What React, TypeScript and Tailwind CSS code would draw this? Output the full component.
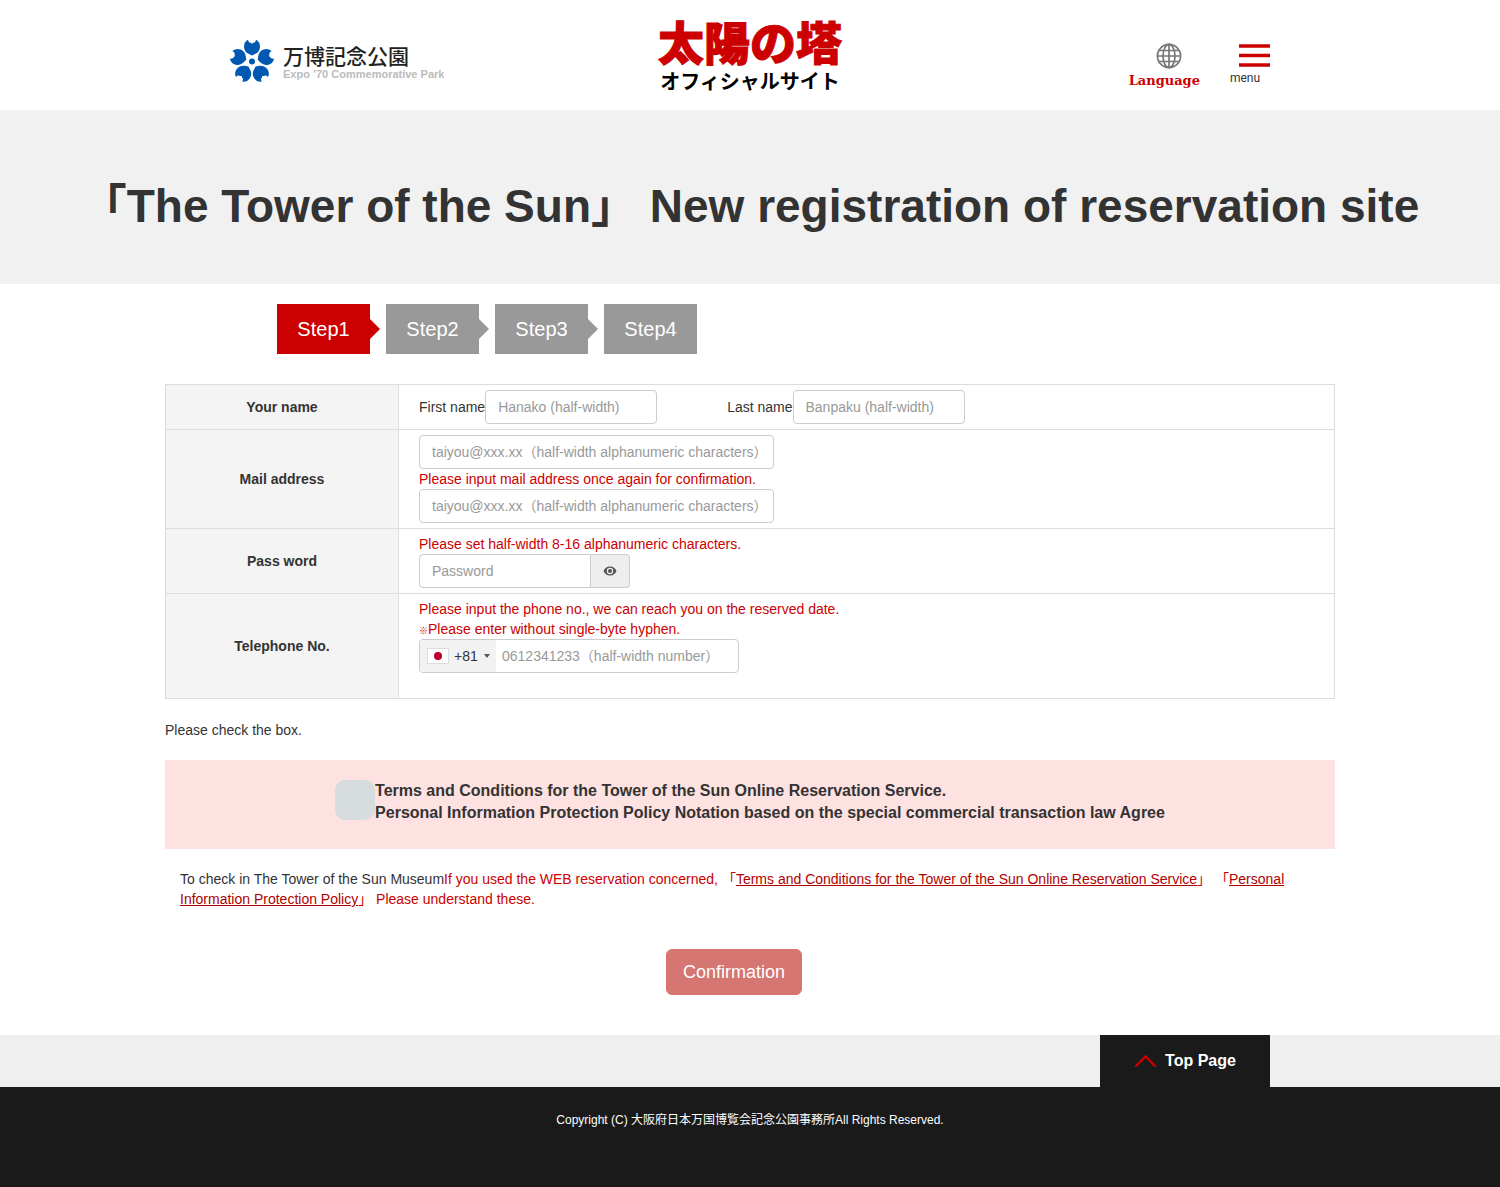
import { useState } from "react";
import type { ReactNode } from "react";

const field =
  "block h-[34px] rounded border border-[#ccc] bg-white px-3 text-sm text-[#555] placeholder:text-[#999] outline-none";

function FlowerLogo() {
  return (
    <svg width="44" height="44" viewBox="0 0 44 44" aria-hidden="true">
      {[0, 72, 144, 216, 288].map((angle) => (
        <path
          key={angle}
          transform={`rotate(${angle} 22 23.6)`}
          d="M18 1.700A8 8 0 0 0 18.500 15.800L22 17.500 25.500 15.800A8 8 0 0 0 26 1.700C25.600 3.200 25 4.200 24.300 4.700 23 4.300 22.800 5.600 22 5.800 21.200 5.600 21 4.300 19.700 4.700 19 4.200 18.400 3.200 18 1.700Z"
          fill="#0058b0"
        />
      ))}
      <circle cx="22" cy="23.6" r="4.6" fill="#fff" />
      <circle cx="22" cy="23.6" r="3" fill="#0058b0" />
    </svg>
  );
}

function Globe() {
  return (
    <svg width="26" height="26" viewBox="0 0 26 26" fill="none" stroke="#777" strokeWidth="1.7" aria-hidden="true">
      <circle cx="13" cy="13" r="11.6" />
      <ellipse cx="13" cy="13" rx="6" ry="11.6" />
      <path d="M13 1v24M1 13h24M3 7.5h20M3 18.5h20" />
    </svg>
  );
}

function Step({ label, active, last }: { label: string; active?: boolean; last?: boolean }) {
  return (
    <li className="flex items-center">
      <span
        className={`flex h-[50px] w-[93px] items-center justify-center text-xl text-white ${active ? "bg-[#c00]" : "bg-[#999]"}`}
      >
        {label}
      </span>
      {!last && (
        <span
          className={`mr-1.5 border-y-10 border-l-10 border-y-transparent ${active ? "border-l-[#c00]" : "border-l-[#999]"}`}
        />
      )}
    </li>
  );
}

function Row({ title, children }: { title: string; children: ReactNode }) {
  return (
    <tr>
      <th scope="row" className="w-[233px] border border-[#ddd] bg-[#f4f4f4] p-[5px] text-center align-middle font-bold">
        {title}
      </th>
      <td className="border border-[#ddd] px-5 py-[5px]">{children}</td>
    </tr>
  );
}

export default function App() {
  const [agreed, setAgreed] = useState(false);
  const [visible, setVisible] = useState(false);

  return (
    <div className="bg-white font-['Liberation_Sans','Noto_Sans_CJK_JP',sans-serif] text-sm leading-5 text-[#333]">
      <header className="mx-auto grid h-[110px] max-w-[1040px] grid-cols-3">
        <a href="#" className="flex items-start gap-[9px] pt-[38px]">
          <FlowerLogo />
          <span className="flex flex-col pt-1">
            <span className="font-['Noto_Sans_CJK_JP',sans-serif] text-[21px] leading-[26px] font-medium text-[#222]">万博記念公園</span>
            <span className="text-[11px] leading-3 font-bold whitespace-nowrap text-[#bbb]">Expo ’70 Commemorative Park</span>
          </span>
        </a>
        <a href="#" className="flex flex-col items-center pt-3.5 font-['Noto_Sans_CJK_JP',sans-serif] whitespace-nowrap">
          <span className="text-[46px] leading-[52px] font-black text-[#c00] [-webkit-text-stroke:1px_#c00]">太陽の塔</span>
          <span className="text-xl leading-[30px] font-bold text-black">オフィシャルサイト</span>
        </a>
        <div className="flex items-start justify-end gap-[30px] pt-[43px]">
          <button type="button" className="flex flex-col items-center">
            <span className="pl-2.5"><Globe /></span>
            <span className="font-['DejaVu_Serif',serif] text-[13px] leading-6 font-bold text-[#c00]">Language</span>
          </button>
          <button type="button" className="flex w-10 flex-col items-end pt-px">
            <svg width="31" height="23" viewBox="0 0 31 23" stroke="#c00" strokeWidth="3.4" aria-hidden="true">
              <path d="M0 2h31M0 11.5h31M0 21h31" />
            </svg>
            <span className="self-start font-[Roboto,sans-serif] text-xs leading-[22px]">menu</span>
          </button>
        </div>
      </header>

      <div className="bg-[#f1f1f1] px-4 pt-[71px] pb-[53px]">
        <h1 className="text-center text-[46px] leading-[50px] font-bold">
          「The Tower of the Sun」 New registration of reservation site
        </h1>
      </div>

      <main className="mx-auto max-w-[1170px] pt-5">
        <ol className="mb-[30px] ml-28 flex">
          <Step label="Step1" active />
          <Step label="Step2" />
          <Step label="Step3" />
          <Step label="Step4" last />
        </ol>

        <form onSubmit={(e) => e.preventDefault()}>
          <table className="w-full border-collapse">
            <tbody>
              <Row title="Your name">
                <div className="flex flex-wrap items-center gap-x-[70px]">
                  <label className="flex items-center">
                    First name
                    <input className={`${field} w-[172px]`} placeholder="Hanako (half-width)" />
                  </label>
                  <label className="flex items-center">
                    Last name
                    <input className={`${field} w-[172px]`} placeholder="Banpaku (half-width)" />
                  </label>
                </div>
              </Row>
              <Row title="Mail address">
                <input type="email" aria-label="Mail address" className={`${field} w-[355px]`} placeholder="taiyou@xxx.xx（half-width alphanumeric characters）" />
                <label htmlFor="mail2" className="block text-[#c00]">Please input mail address once again for confirmation.</label>
                <input id="mail2" type="email" className={`${field} w-[355px]`} placeholder="taiyou@xxx.xx（half-width alphanumeric characters）" />
              </Row>
              <Row title="Pass word">
                <label htmlFor="password" className="block text-[#c00]">Please set half-width 8-16 alphanumeric characters.</label>
                <div className="flex">
                  <input id="password" type={visible ? "text" : "password"} className={`${field} w-[172px] rounded-r-none`} placeholder="Password" />
                  <button
                    type="button"
                    aria-label="Show password"
                    onClick={() => setVisible(!visible)}
                    className="flex h-[34px] w-[39px] items-center justify-center rounded-r border border-l-0 border-[#ccc] bg-[#eee]"
                  >
                    <svg width="14" height="10" viewBox="0 0 14 10" aria-hidden="true">
                      <path fillRule="evenodd" d="M7 .5C3.8.5 1.5 2.5.5 5 1.5 7.5 3.8 9.5 7 9.5S12.5 7.5 13.5 5C12.5 2.5 10.2.5 7 .5ZM7 1.8A3.2 3.2 0 1 1 7 8.2 3.2 3.2 0 0 1 7 1.8Z" fill="#555" />
                      <circle cx="7" cy="5" r="2" fill="#555" />
                    </svg>
                  </button>
                </div>
              </Row>
              <Row title="Telephone No.">
                <label htmlFor="phone" className="block text-[#c00]">
                  Please input the phone no., we can reach you on the reserved date.
                  <br />
                  <span className="text-[9px] leading-none font-bold">※</span>Please enter without single-byte hyphen.
                </label>
                <div className="mb-5 flex h-[34px] w-80 overflow-hidden rounded border border-[#ccc]">
                  <button type="button" aria-label="Country code" className="flex w-[76px] shrink-0 items-center bg-[#f2f2f2] pl-[7px]">
                    <span className="flex h-4 w-[22px] items-center justify-center border border-[#ddd] bg-white">
                      <span className="size-2 rounded-full bg-[#bc002d]" />
                    </span>
                    <span className="ml-[5px]">+81</span>
                    <span className="ml-1.5 border-x-3 border-t-4 border-x-transparent border-t-[#555]" />
                  </button>
                  <input id="phone" type="tel" className="min-w-0 flex-1 px-1.5 placeholder:text-[#999] outline-none" placeholder="0612341233（half-width number）" />
                </div>
              </Row>
            </tbody>
          </table>

          <p className="mt-[21px]">Please check the box.</p>

          <div className="mt-5 flex justify-center bg-[#fee1e1] pt-5 pb-[25px]">
            <label className="flex text-base leading-[22px] font-bold">
              <input
                type="checkbox"
                checked={agreed}
                onChange={(e) => setAgreed(e.target.checked)}
                className="size-10 shrink-0 appearance-none rounded-[10px] bg-[#d7dcde] checked:bg-[#c00]"
              />
              <span>
                Terms and Conditions for the Tower of the Sun Online Reservation Service.
                <br />
                Personal Information Protection Policy Notation based on the special commercial transaction law Agree
              </span>
            </label>
          </div>

          <p className="mt-5 px-[15px] text-[#c00]">
            <span className="text-[#333]">To check in The Tower of the Sun Museum</span>If you used the WEB reservation concerned, 「
            <a href="#" className="text-[#b00000] underline">Terms and Conditions for the Tower of the Sun Online Reservation Service</a>」 「
            <a href="#" className="text-[#b00000] underline">Personal Information Protection Policy</a>」 Please understand these.
          </p>

          <div className="mt-10 mb-10 flex justify-center pr-8">
            <button
              type="submit"
              disabled={!agreed}
              className="h-[46px] rounded-md border border-[#e07070] bg-[#c9302c] px-4 text-lg text-white disabled:bg-[#d67672]"
            >
              Confirmation
            </button>
          </div>
        </form>
      </main>

      <footer>
        <div className="bg-[#efefef]">
          <div className="mx-auto flex max-w-[1040px] justify-end">
            <a href="#" className="flex h-[52px] w-[170px] items-center justify-center gap-2 bg-[#1a1a1a] text-base font-bold text-white">
              <svg width="23" height="14" viewBox="0 0 23 14" fill="none" stroke="#c00" strokeWidth="2.4" strokeLinecap="round" aria-hidden="true">
                <path d="M2 12 11.5 2.5 21 12" />
              </svg>
              Top Page
            </a>
          </div>
        </div>
        <p className="bg-[#1a1a1a] pt-[23px] pb-[57px] text-center text-xs leading-5 text-white">
          Copyright (C) 大阪府日本万国博覧会記念公園事務所All Rights Reserved.
        </p>
      </footer>
    </div>
  );
}
